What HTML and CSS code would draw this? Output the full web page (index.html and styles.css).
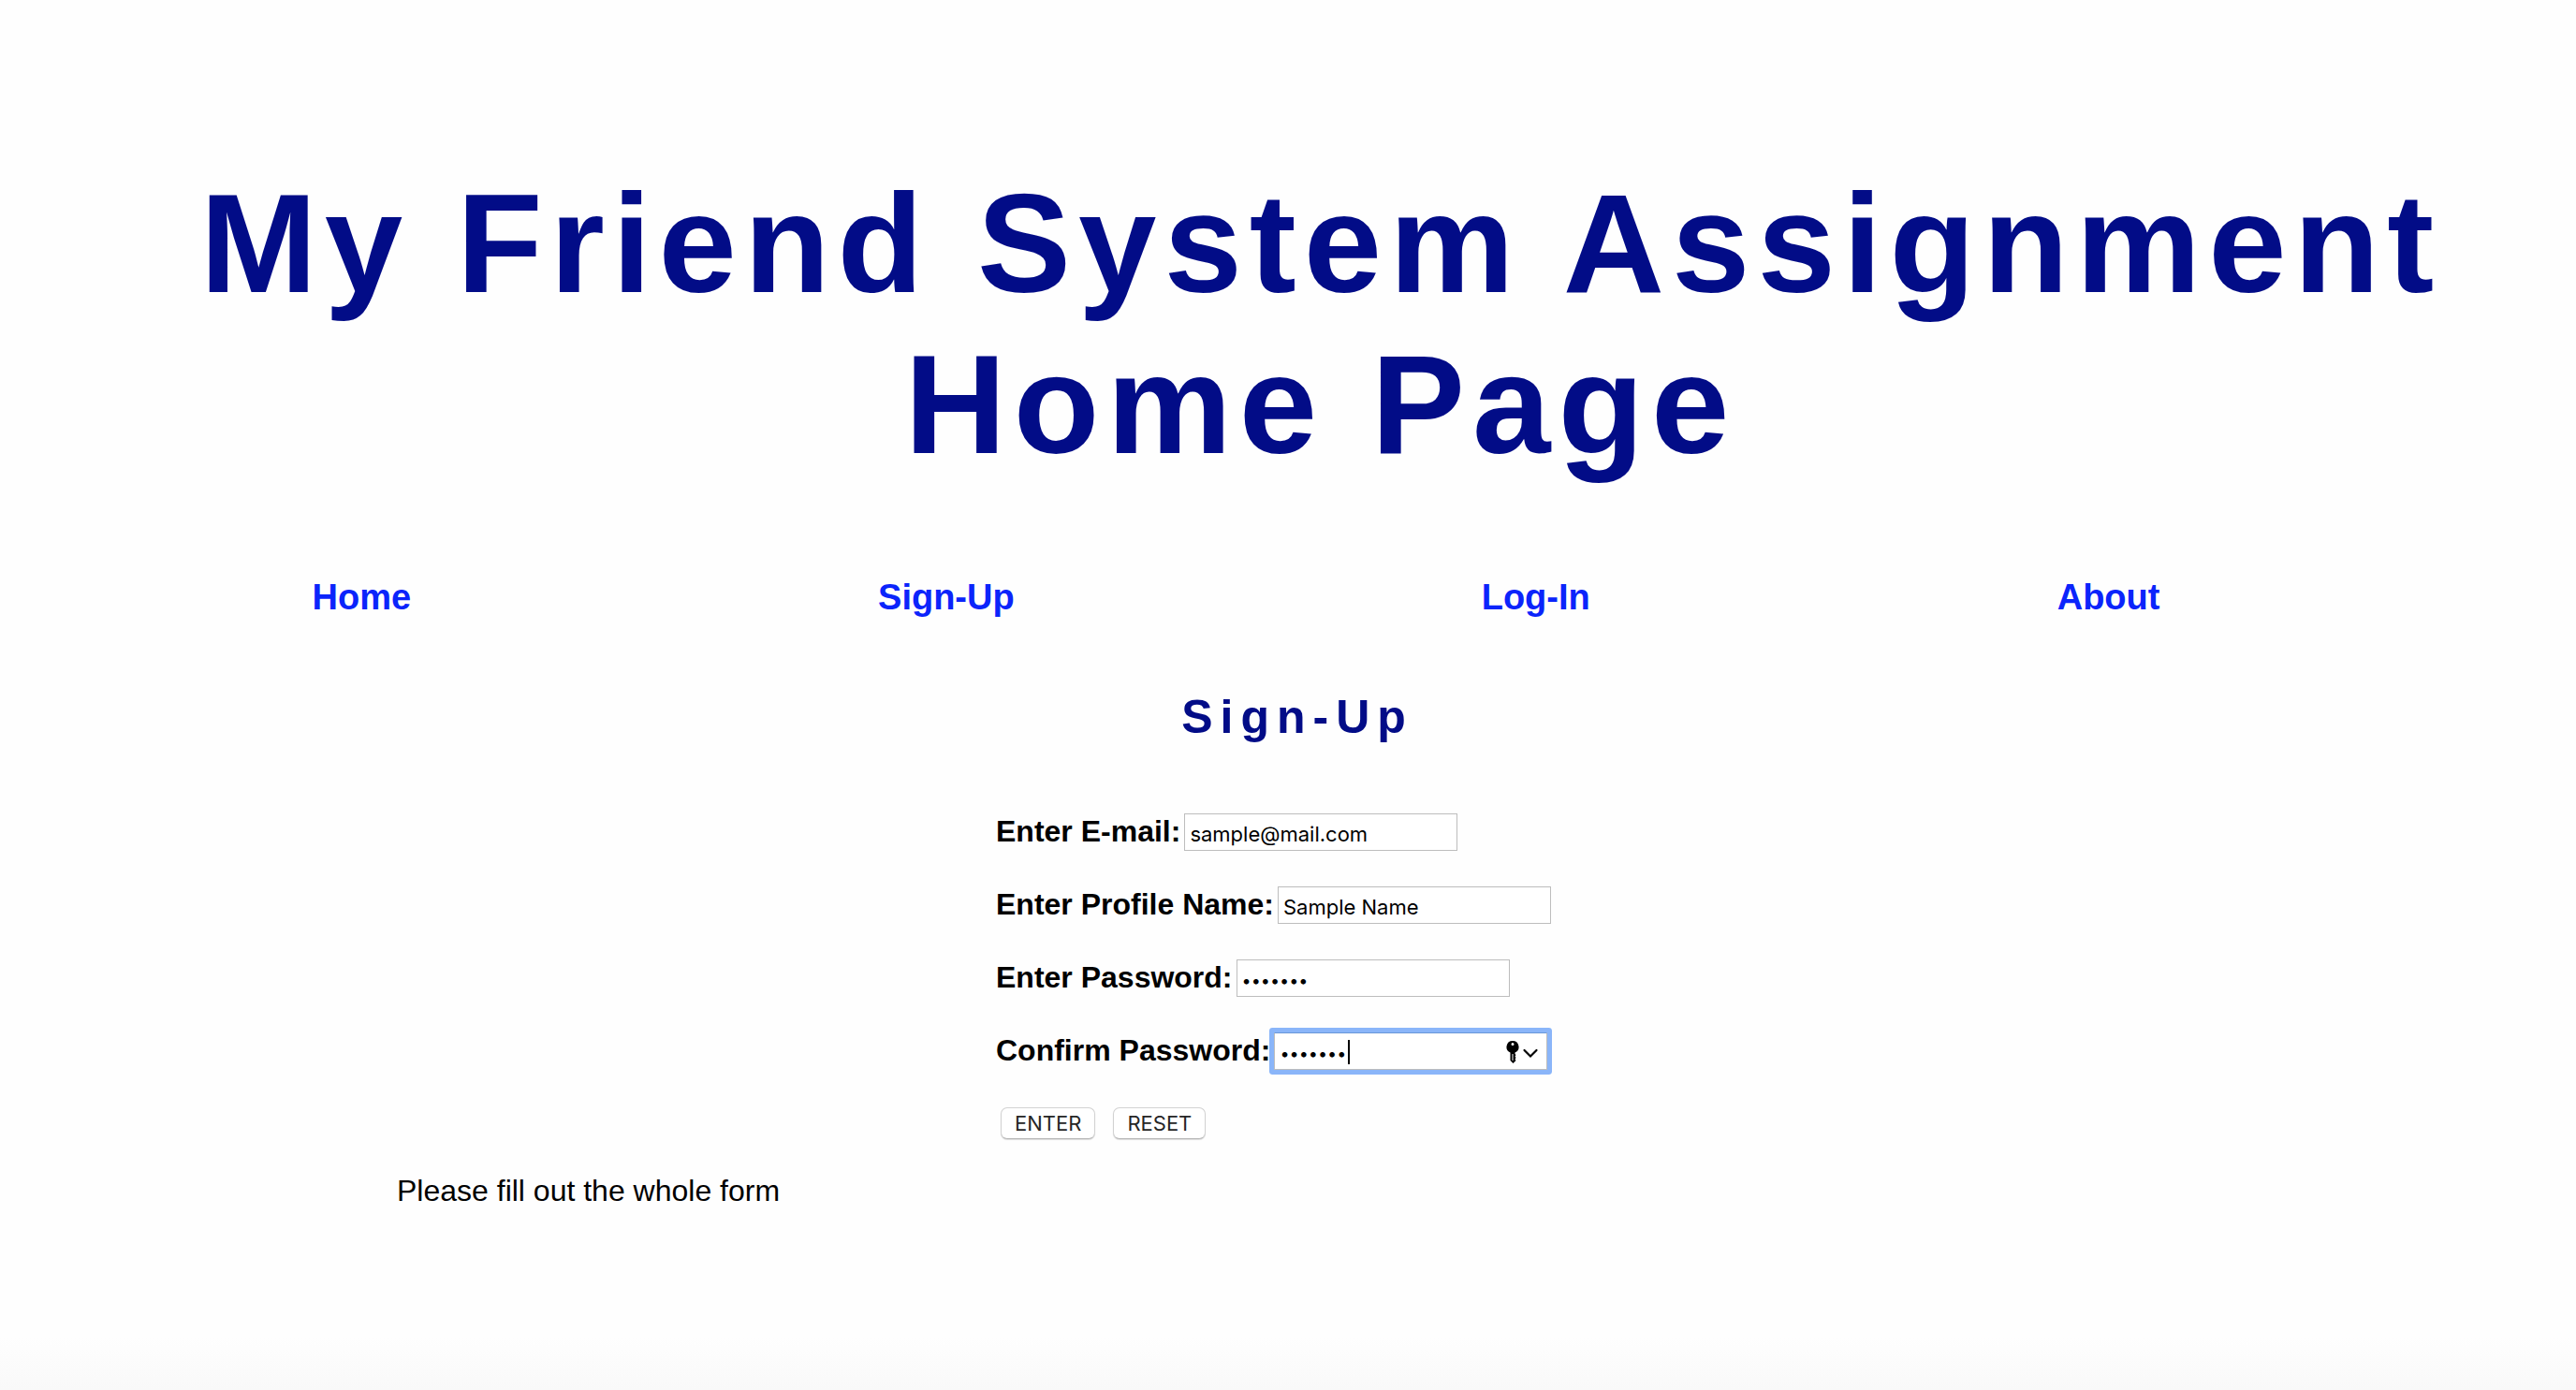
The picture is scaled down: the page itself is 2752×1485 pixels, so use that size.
FILE: index.html
```html
<!DOCTYPE html>
<html lang="en">
<head>
<meta charset="utf-8">
<title>My Friend System Assignment</title>
<link rel="stylesheet" href="styles.css">
</head>
<body>
<header class="masthead">
  <h1 class="title">My Friend System Assignment Home Page</h1>
</header>
<nav class="menu">
  <a class="menu-link" href="#home">Home</a>
  <a class="menu-link" href="#signup">Sign-Up</a>
  <a class="menu-link" href="#login">Log-In</a>
  <a class="menu-link" href="#about">About</a>
</nav>
<main>
  <h2 class="subtitle">Sign-Up</h2>
  <form class="form">
    <div class="row">
      <label class="label" for="email">Enter E-mail:</label>
      <input class="field" id="email" type="text" value="sample@mail.com">
    </div>
    <div class="row">
      <label class="label" for="profile">Enter Profile Name:</label>
      <input class="field" id="profile" type="text" value="Sample Name">
    </div>
    <div class="row">
      <label class="label" for="password">Enter Password:</label>
      <input class="field secret" id="password" type="password" value="abcdefg">
    </div>
    <div class="row">
      <label class="label" for="confirm">Confirm Password:</label>
      <div class="field-wrap">
        <input class="field secret active" id="confirm" type="password" value="abcdefg">
        <span class="caret"></span>
        <svg class="key" viewBox="0 0 36 26" width="36" height="26" aria-hidden="true">
          <path fill="#000" fill-rule="evenodd" d="M7 1a6.500 6.500 0 0 1 2.500 12.500V15l1 1-1 1.500 1 1.500-1 1.500 1 1.500L7.500 25 4.500 22V13.500A6.500 6.500 0 0 1 7 1zM7 3a1.500 1.500 0 1 0 0 3 1.500 1.500 0 0 0 0-3zM6.500 15v7h1v-7z"/>
          <path d="M19.500 11l6.500 6.500 6.500-6.500" fill="none" stroke="#000" stroke-width="2.200" stroke-linecap="round"/>
        </svg>
      </div>
    </div>
    <div class="buttons">
      <button class="button" type="submit">ENTER</button>
      <button class="button" type="reset">RESET</button>
    </div>
  </form>
  <p class="message">Please fill out the whole form</p>
</main>
</body>
</html>
```
FILE: styles.css
```css
* {
  box-sizing: border-box;
}

body {
  margin: 0;
  min-height: 100vh;
  background: #fefefe linear-gradient(#fefefe, #f9f9f9) bottom / 100% 56px no-repeat;
  color: #000;
  font-family: "Liberation Sans", Arial, sans-serif;
  font-size: 32px;
  line-height: 36px;
}

.masthead {
  padding: 174px 70px 0 140px;
}

.title {
  margin: 0;
  color: #020c87;
  font-size: 150px;
  line-height: 172px;
  letter-spacing: 8px;
  text-align: center;
}

.menu {
  display: flex;
  justify-content: space-around;
  margin-top: 98px;
  padding: 0 195px 0 84px;
}

.menu-link {
  color: #0b24fb;
  font-size: 38px;
  font-weight: bold;
  line-height: 44px;
  text-decoration: none;
}

.subtitle {
  margin: 77px 0 0;
  padding-left: 20px;
  color: #020c87;
  font-size: 50px;
  line-height: 58px;
  letter-spacing: 8px;
  text-align: center;
}

.form {
  display: flex;
  flex-direction: column;
  gap: 38px;
  width: 624px;
  margin: 74px auto 0;
}

.row {
  display: flex;
  align-items: center;
  gap: 4px;
  height: 40px;
}

.label {
  padding-bottom: 2px;
  font-weight: bold;
  white-space: nowrap;
}

.field {
  width: 292px;
  height: 40px;
  margin: 0;
  padding: 6px 5px 2px;
  border: 1px solid #bdbdbd;
  background: #fff;
  color: #000;
  font-family: Inter, sans-serif;
  font-size: 22px;
  outline: none;
}

.secret {
  font-size: 18px;
}

.field-wrap {
  position: relative;
  display: flex;
}

.active {
  border-top-color: #6a97d8;
  box-shadow: 0 0 0 5px #8ab5f9;
  border-radius: 1px;
}

.caret {
  position: absolute;
  top: 8px;
  left: 79px;
  width: 2px;
  height: 26px;
  background: #000;
}

.key {
  position: absolute;
  top: 8px;
  right: 8px;
}

.buttons {
  display: flex;
  gap: 19px;
  padding: 2px 0 0 5px;
}

.button {
  height: 34px;
  margin: 0;
  padding: 0 14px;
  border: 1px solid #d2d2d2;
  border-bottom-color: #b5b5b5;
  border-radius: 7px;
  background: #fff;
  box-shadow: 0 1px 1px #dcdcdc;
  color: #262626;
  font-family: Inter, sans-serif;
  font-size: 22px;
  line-height: 30px;
}

.message {
  margin: 37px 0 0;
  padding-left: 424px;
}
```
